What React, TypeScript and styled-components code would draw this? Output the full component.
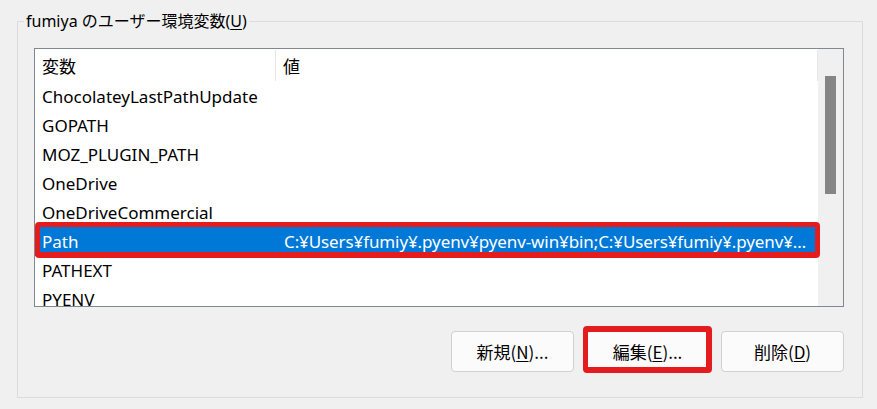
import React from "react";
import styled, { createGlobalStyle } from "styled-components";

const Global = createGlobalStyle`
  html, body { margin: 0; padding: 0; background: #f0f0f0; }
  body {
    font-family: "Noto Sans", "Noto Sans CJK JP", sans-serif;
    color: #000;
  }
`;

const Page = styled.div`
  width: 877px;
  height: 409px;
  box-sizing: border-box;
  padding: 10px 0 0 17px;
  background: #f0f0f0;
  overflow: hidden;
`;

const Group = styled.fieldset`
  margin: 0;
  width: 846px;
  height: 388px;
  box-sizing: border-box;
  border: 1px solid #dcdcdc;
  padding: 16px 18px 24px 16px;
  display: flex;
  flex-direction: column;
  gap: 24px;
`;

const Legend = styled.legend`
  margin-left: -10px;
  padding: 0 2px;
  font-size: 16px;
  line-height: 22px;
  font-family: "Noto Sans", "Noto Sans CJK JP", sans-serif;
`;

const Mn = styled.span`
  text-decoration: underline;
  text-underline-offset: 2px;
`;

const ListBox = styled.div`
  width: 810px;
  height: 259px;
  box-sizing: border-box;
  border: 1px solid #828790;
  background: #fff;
  display: flex;
  overflow: hidden;
`;

const Table = styled.div`
  flex: 1;
  display: flex;
  flex-direction: column;
  min-width: 0;
`;

const Header = styled.div`
  display: grid;
  grid-template-columns: 241px 1fr;
  height: 33px;
  flex: none;
`;

const HeadCell = styled.div`
  display: flex;
  align-items: center;
  padding-left: 7px;
  font-size: 17px;
  font-family: "Noto Sans CJK JP", sans-serif;
  border-right: 1px solid #e5e5e5;
  margin: 1px 0 1px;
`;

const Row = styled.div<{ $selected?: boolean }>`
  position: relative;
  display: grid;
  grid-template-columns: 242px 1fr;
  height: 29px;
  flex: none;
  align-items: center;
  font-size: 17px;
  font-family: "Noto Sans", "Noto Sans CJK JP", sans-serif;
  background: ${(p) => (p.$selected ? "#0078d7" : "transparent")};
  color: ${(p) => (p.$selected ? "#fff" : "#000")};
  ${(p) =>
    p.$selected &&
    `
    &::after {
      content: "";
      position: absolute;
      left: 0;
      right: -2px;
      top: -5px;
      bottom: -2px;
      border: 5px solid #e41c1e;
      border-bottom-width: 6px;
      border-radius: 4px;
    }
  `}
`;

const Cell = styled.div`
  padding-left: 7px;
  white-space: nowrap;
  overflow: hidden;
  text-overflow: ellipsis;
`;

const ValueCell = styled(Cell)`
  padding-right: 10px;
  letter-spacing: -0.1px;
`;

const ScrollTrack = styled.div`
  width: 25px;
  flex: none;
  background: #f0f0f0;
  display: flex;
  justify-content: center;
  padding-top: 27px;
  box-sizing: border-box;
`;

const Thumb = styled.div`
  width: 11px;
  height: 118px;
  background: #858585;
`;

const Buttons = styled.div`
  display: flex;
  justify-content: flex-end;
  gap: 12px;
  width: 810px;
`;

const Button = styled.button<{ $marked?: boolean }>`
  position: relative;
  width: 123px;
  height: 41px;
  box-sizing: border-box;
  background: #fbfbfb;
  border: 1px solid #d0d0d0;
  border-radius: 4px;
  font-size: 17px;
  font-family: "Noto Sans CJK JP", sans-serif;
  color: #000;
  padding: 0;
  ${(p) =>
    p.$marked &&
    `
    &::after {
      content: "";
      position: absolute;
      left: -4px;
      right: -4px;
      top: -6px;
      bottom: -2px;
      border: 6px solid #e41c1e;
      border-left-width: 5px;
      border-radius: 4px;
    }
  `}
`;

const rows: { name: string; value: string; selected?: boolean }[] = [
  { name: "ChocolateyLastPathUpdate", value: "" },
  { name: "GOPATH", value: "" },
  { name: "MOZ_PLUGIN_PATH", value: "" },
  { name: "OneDrive", value: "" },
  { name: "OneDriveCommercial", value: "" },
  {
    name: "Path",
    value:
      "C:¥Users¥fumiy¥.pyenv¥pyenv-win¥bin;C:¥Users¥fumiy¥.pyenv¥pyenv-win¥shims;C:¥Users¥fumiy¥AppData",
    selected: true,
  },
  { name: "PATHEXT", value: "" },
  { name: "PYENV", value: "" },
];

export default function App() {
  return (
    <Page>
      <Global />
      <Group>
        <Legend>
          fumiya のユーザー環境変数(<Mn>U</Mn>)
        </Legend>
        <ListBox>
          <Table>
            <Header>
              <HeadCell>変数</HeadCell>
              <HeadCell>値</HeadCell>
            </Header>
            {rows.map((r) => (
              <Row key={r.name} $selected={r.selected}>
                <Cell>{r.name}</Cell>
                <ValueCell>{r.value}</ValueCell>
              </Row>
            ))}
          </Table>
          <ScrollTrack>
            <Thumb />
          </ScrollTrack>
        </ListBox>
        <Buttons>
          <Button>
            新規(<Mn>N</Mn>)...
          </Button>
          <Button $marked>
            編集(<Mn>E</Mn>)...
          </Button>
          <Button>
            削除(<Mn>D</Mn>)
          </Button>
        </Buttons>
      </Group>
    </Page>
  );
}
